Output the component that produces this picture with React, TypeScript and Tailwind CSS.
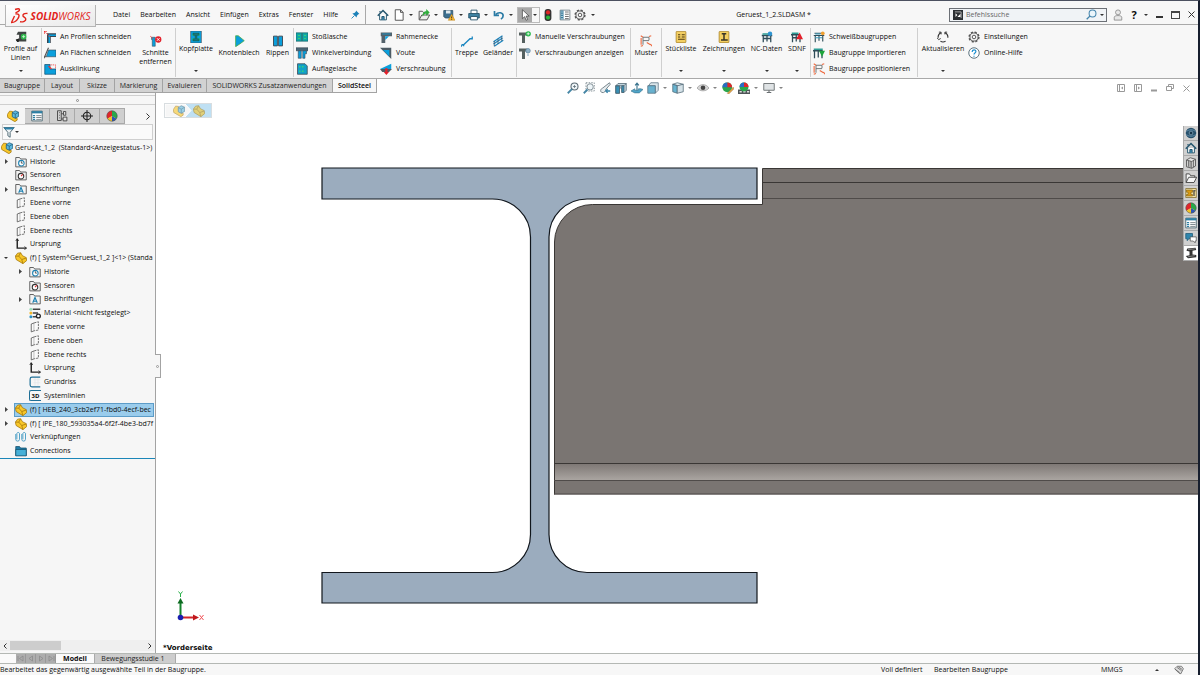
import React from "react";
import type { ReactNode } from "react";

const BLUE = "#0a9fdc";
const DARK = "#3b4650";

const shapes: Record<string, ReactNode> = {
  home: (
    <g stroke="#26566e" fill="none" strokeWidth="1.3">
      <path d="M3.500 8v6.500h9V8" fill="#fff" />
      <path d="M6.500 14.500V10h3v4.500" fill="#3c90b8" />
      <path d="M1 9L8 2l7 7" strokeWidth="2" />
      <path d="M4 4.500V2.500" strokeWidth="1.600" />
    </g>
  ),
  doc: <path d="M3 1h7l3.500 3.500V15H3zM10 1v3.500h3.500" fill="#fff" stroke="#555" strokeWidth="1.300" />,
  open: (
    <g strokeWidth="1.300">
      <path d="M1.500 14V3H6l1.500 2H12v3" fill="#f4f4f4" stroke="#555" />
      <path d="M1.500 14.500L5 8h10.500L12 14.500z" fill="#eee" stroke="#555" />
      <path d="M6 10c0-5 2-7 5-7V0l4.500 4.500L11 9V6C8.500 6 7.500 8 6 10z" fill="#2fae3c" />
    </g>
  ),
  save: (
    <g>
      <path d="M1 2h12v10H3L1 10z" fill="#3c6f8e" stroke="#2b4b60" />
      <path d="M4 2h6v4H4z" fill="#dfe9ee" />
      <path d="M11.500 7l4.500 8H7z" fill="#f7b52c" stroke="#b97a10" strokeWidth=".6" />
      <path d="M11.500 10v2.500M11.500 13.300v1" stroke="#222" strokeWidth="1.100" />
    </g>
  ),
  print: (
    <g stroke="#27556b" strokeWidth="1.200">
      <path d="M4 6V1.500h8V6" fill="#fff" />
      <path d="M1 6h14v6H1z" fill="#3f83a3" />
      <path d="M3.500 10h9v4.500h-9z" fill="#fff" />
    </g>
  ),
  undo: (
    <g fill="none" stroke="#2a7ba5" strokeWidth="2.200">
      <path d="M3.500 7.500C7 3.500 13.500 4.500 13.500 9c0 2-1 3.500-3 4.500" />
      <path d="M2 2.500v6h6" />
    </g>
  ),
  cursor: <path d="M4.500 1v12l3-2.800 2 4.800 2-1-2-4.600h4z" fill="#fff" stroke="#444" strokeWidth="1" />,
  traffic: (
    <g>
      <rect x="3.500" y="0" width="9" height="16" rx="4" fill="#333" />
      <circle cx="8" cy="4.500" r="2.800" fill="#e02626" />
      <circle cx="8" cy="11.400" r="2.800" fill="#29b53a" />
    </g>
  ),
  list: (
    <g>
      <path d="M1.500 1.500h13v13h-13z" fill="#fff" stroke="#5c6b73" />
      <path d="M2 2h4v12H2z" fill="#3a7f9f" />
      <path d="M3 4h2M3 7h2M3 10h2M3 13h2" stroke="#fff" />
      <path d="M8 4h5M8 7h5M8 10h5M8 12.800h5" stroke="#444" />
    </g>
  ),
  gear: (
    <g fill="none" stroke="#555">
      <circle cx="8" cy="8" r="6.500" strokeWidth="2" strokeDasharray="2.900 2.205" />
      <circle cx="8" cy="8" r="5.400" strokeWidth="1.200" />
      <circle cx="8" cy="8" r="2.400" strokeWidth="1.300" />
    </g>
  ),
  pin: (
    <g fill="#1c82b9">
      <path d="M9 1l6 6-2 .5-2.500 2.500-.5 3.500L2.500 6 6 5.500 8.500 3z" />
      <path d="M6 10l-5 5" stroke="#1c82b9" strokeWidth="1.600" />
    </g>
  ),
  person: (
    <g fill="#e8e8e8" stroke="#888" strokeWidth="1.100">
      <circle cx="8" cy="4.500" r="3.300" />
      <path d="M3 14.800V11c0-3 10-3 10 0v3.800z" />
    </g>
  ),
  lens: (
    <g fill="#eaf5fb" stroke="#4585ad" strokeWidth="1.500">
      <path d="M6 10L1 15" strokeWidth="2" />
      <circle cx="9.500" cy="6.500" r="5" />
    </g>
  ),
  prompt: (
    <g>
      <rect width="16" height="16" fill="#2a2f33" />
      <path d="M3 3h10v10" fill="none" stroke="#ccc" strokeWidth="1.200" />
      <path d="M4 5l3 3-3 3M12 6v5H7z" fill="#fff" />
    </g>
  ),
  profile: (
    <g>
      <path d="M4 1h11v4H9.500v5H15v4H3l-2-2.500L5.500 10V5H2z" fill="#3f4443" />
      <path d="M1 11.500l4-1.500v4.500H3z" fill="#222" />
      <circle cx="11.500" cy="7.500" r="3.800" fill="#2fb54b" />
      <path d="M9.500 7.500h4M11.500 5.500v4" stroke="#d8ffe0" strokeWidth="1" />
    </g>
  ),
  cutProfile: (
    <g>
      <path d="M4 3h12v5H9v8H4z" fill={DARK} />
      <path d="M6 4.500h10v2.300H8V16H6z" fill={BLUE} />
      <path d="M0 0l8 8" stroke="#e33" strokeWidth="1.200" strokeDasharray="2 1" />
      <path d="M0 .5h4M.5 0v4" stroke="#e33" />
    </g>
  ),
  cutFace: (
    <g>
      <path d="M6 4h10v9H3z" fill={BLUE} stroke={DARK} strokeWidth=".8" />
      <path d="M0 15L6 1M0 13h3" stroke="#555" strokeWidth="1.500" />
    </g>
  ),
  notch: (
    <g>
      <path d="M1 2h7v6h8v7H1z" fill={BLUE} stroke="#17557a" strokeWidth="1" />
      <path d="M8.500 2.500h7V8" fill="none" stroke="#e33" strokeWidth="1" strokeDasharray="2 1" />
      <path d="M6 4l4 4" stroke="#e33" strokeWidth="1.500" />
    </g>
  ),
  removeCut: (
    <g>
      <path d="M2 3h5v12H3V6H2z" fill={BLUE} stroke={DARK} strokeWidth=".7" />
      <path d="M0 1l4 4" stroke="#e33" />
      <circle cx="11" cy="6" r="4.200" fill="#e3202b" />
      <path d="M9.200 4.200l3.600 3.600M12.800 4.200L9.200 7.800" stroke="#fff" strokeWidth="1.200" />
    </g>
  ),
  headPlate: (
    <g>
      <rect x="1" y="0" width="14" height="16" fill={BLUE} stroke={DARK} strokeWidth=".8" />
      <path d="M4 3h8v2.500H9v5h3V13H4v-2.500h3v-5H4z" fill="#16788a" stroke="#1b5b2d" strokeWidth=".8" />
      <path d="M3 5.500h1.500M11.500 5.500H13M3 10.500h1.500M11.500 10.500H13" stroke="#24d05a" strokeWidth="1.200" />
    </g>
  ),
  gusset: <path d="M3.500 1H7l8 6.500L9 12l-5.500 3.500z" fill={BLUE} stroke="#47aa3c" strokeWidth="1" />,
  ribs: (
    <g fill={BLUE} stroke={DARK} strokeWidth="1.200">
      <path d="M2 1.500h5.200v13H2zM8.800 1.500H14v13H8.800z" />
    </g>
  ),
  splice: (
    <g>
      <rect x="0" y="2.500" width="16" height="11" fill="#10a8a8" stroke="#17636a" />
      <path d="M8 3v10" stroke={DARK} />
      <path d="M3 6h2M3 10h2M11 6h2M11 10h2" stroke="#45e067" strokeWidth="1.500" />
    </g>
  ),
  angle: (
    <g stroke={DARK} strokeWidth=".8">
      <path d="M0 1h16v4H0z" fill="#4a6675" />
      <path d="M3 5h4v10H3zM9 5h5v4h-2v6H9z" fill={BLUE} />
    </g>
  ),
  bearing: (
    <g>
      <path d="M2 1h10l3 3v11H2z" fill="#12a1c8" stroke={DARK} />
      <path d="M4 5h8M4 11h8" stroke="#35d37a" strokeDasharray="2 2" strokeWidth="2" />
    </g>
  ),
  corner: (
    <g>
      <path d="M1 2h15v5H7v9H2V7H1z" fill="#54626b" />
      <path d="M7 7h5l-5 5z" fill={BLUE} />
      <path d="M3 4h11" stroke={BLUE} strokeWidth="1" />
    </g>
  ),
  haunch: (
    <g>
      <path d="M0 1h15v15z" fill="#4d5b64" />
      <path d="M4 4h8.500v8.500z" fill={BLUE} />
    </g>
  ),
  bolting: (
    <g>
      <path d="M0 8L15 1v7z" fill={BLUE} />
      <path d="M0 8h16l-4 4H3z" fill="#4d5b64" />
      <path d="M7 7h3v5h2l-3.500 4L5 12h2z" fill="#e3202b" />
    </g>
  ),
  stair: <path d="M0 15.500L1.500 13h2l8.500-8h3V2M3.500 13v2" fill="none" stroke="#1b86c0" strokeWidth="1.700" />,
  rail: (
    <g stroke="#1b86c0" strokeWidth="1.700">
      <path d="M2 9L14 1M2 12L14 4M3 15L15 7" />
      <path d="M3 8v7M8 5v7M13 2v6" stroke="#35536a" strokeWidth="1" />
    </g>
  ),
  boltManual: (
    <g>
      <path d="M0 2h11v4H8v10H4V6H0z" fill="#55605f" />
      <circle cx="12.300" cy="3.700" r="3.500" fill="#27b94a" />
      <path d="M10.300 3.700h4M12.300 1.700v4" stroke="#fff" />
    </g>
  ),
  boltShow: (
    <g>
      <path d="M0 2h11v4H8v10H4V6H0z" fill="#55605f" />
      <circle cx="12" cy="5" r="3" fill="#8eb0c6" stroke="#5f87a1" />
      <path d="M12 9v3" stroke="#8eb0c6" strokeWidth="1.500" />
    </g>
  ),
  pattern: (
    <g fill="none">
      <path d="M4 13V3h8v4M4 7.500h8" stroke="#6d7376" strokeWidth="1.300" />
      <path d="M1 1l3 2M12 2l3-1M9 10l5 3M1 15l3-1M1.500 4v9M14 12l2 3" stroke="#ee6a40" strokeWidth="1.500" />
    </g>
  ),
  parts: (
    <g>
      <rect x="1.500" y="0.500" width="13" height="15" rx="1" fill="#f4cf62" stroke="#a67d22" />
      <path d="M4 5h3M9 5h4M4 8h3M9 8h4M4 11h9" stroke="#4d3a12" strokeWidth="1.400" />
    </g>
  ),
  drawing: (
    <g>
      <rect x="1.500" y="0.500" width="13" height="15" rx="1" fill="#f4cf62" stroke="#a67d22" />
      <path d="M5 3.500h6M8 3.500v8M4 12h9" stroke="#3a3426" strokeWidth="2" />
    </g>
  ),
  nc: (
    <g fill="none">
      <path d="M1 6h14M3 6v9M8 6v8M13 6v9M3 10h10" stroke="#2e4c58" strokeWidth="1.700" />
      <path d="M2 4h9" stroke="#2c9c95" strokeWidth="2" />
      <circle cx="12" cy="3.500" r="3" fill="#2e95d2" />
    </g>
  ),
  sdnf: (
    <g fill="none">
      <path d="M0 5h12M2 5v10M7 5v9M12 8v7M2 9h8" stroke="#2e4c58" strokeWidth="1.700" />
      <path d="M1 3h9" stroke="#2c9c95" strokeWidth="2" />
      <path d="M11.500 2l4.500 9H7z" fill="#e3202b" />
    </g>
  ),
  weld: (
    <g fill="none">
      <path d="M1 6h14M3 6v9M8 6v7M13 6v8M2 3h12" stroke="#2e4c58" strokeWidth="1.500" />
      <path d="M3 4h7M3 9h9" stroke="#3b9fc0" strokeWidth="1.600" />
      <circle cx="13" cy="3" r="2.500" fill="#f0a030" />
    </g>
  ),
  importAsm: (
    <g fill="none">
      <path d="M0 5h13M2 5v10M7 5v9M12 5v10" stroke="#2e4c58" strokeWidth="1.700" />
      <path d="M1 3h12" stroke="#2c9c95" strokeWidth="2" />
      <path d="M8 5h8l-4 8z" fill="#1ea43c" />
    </g>
  ),
  refresh: (
    <g fill="none" stroke="#333" strokeWidth="1.500">
      <path d="M5.300 2.200A6.500 6.500 0 0 0 2.200 11M10.700 2.200A6.500 6.500 0 0 1 13.800 11M4.500 13.500a6.500 6.500 0 0 0 7 0" strokeDasharray="8 2" />
      <path d="M2.500 1.500h3v3M0 9l2.200 2.500L5 10M13.500 1.500h-3v3" strokeWidth="1.200" />
    </g>
  ),
  help: (
    <g fill="none">
      <circle cx="8" cy="8" r="7" fill="#fff" stroke="#4d6674" strokeWidth="1.200" />
      <path d="M5.500 6.500c0-3.500 5-3.500 5-.5 0 2-2.500 2-2.500 4M8 11.500v1.500" stroke="#1d8fd0" strokeWidth="1.600" />
    </g>
  ),
  zoomFit: (
    <g fill="none" stroke="#5d6c75" strokeWidth="1.400">
      <circle cx="10" cy="6" r="4.700" fill="#eef5f8" />
      <path d="M6.500 9.500L1 15" stroke="#4586a5" strokeWidth="2.400" />
      <path d="M8 6h4M10 4v4" strokeWidth="1" />
    </g>
  ),
  zoomArea: (
    <g fill="none" stroke="#7b8990" strokeWidth="1.200">
      <path d="M4 1h11v11H4z" strokeDasharray="2 1.500" />
      <circle cx="9.500" cy="6.500" r="4.200" fill="#eef5f8" />
      <path d="M6 10l-5 5" stroke="#4586a5" strokeWidth="2.400" />
    </g>
  ),
  prevView: (
    <g fill="none" stroke="#76848b" strokeWidth="1.300">
      <path d="M14 1L5 8c-3 1-4 5-1 6s5-2 5-4l6-7z" fill="#e7edf0" />
      <path d="M15 12H9M11.500 9.500L9 12l2.500 2.500" stroke="#3a84a8" strokeWidth="1.800" />
    </g>
  ),
  section: (
    <g stroke="#4f6470" strokeWidth="1">
      <path d="M1 5l3-3h11v9l-3 3H9V8H6v7H1z" fill="#c3d6df" />
      <path d="M1 5h5v10H1zM9 5h3v9H9z" fill="#378fb5" />
      <path d="M1 5h11l3-3" fill="none" />
    </g>
  ),
  orient: (
    <g fill="none" stroke="#37718c" strokeWidth="1.500">
      <path d="M8 12V2M5.500 4.500L8 1.500l2.500 3" />
      <path d="M0 12l5-3v2h5V9h3l3 1-5 4.500H5z" fill="#4fa5c8" strokeWidth=".8" />
    </g>
  ),
  viewBox: (
    <g stroke="#577080" strokeWidth="1">
      <path d="M5 1h10v10l-4 4V5H2z" fill="#dbe6eb" />
      <path d="M1 5h10v10H1z" fill="#67b1cf" />
    </g>
  ),
  cube: (
    <g stroke="#4d6674" strokeWidth="1">
      <path d="M1 3l6-2 8 2-6 2z" fill="#e6f1f5" />
      <path d="M1 3l6 2v10l-6-2z" fill="#68b4d1" />
      <path d="M15 3L7 5v10l8-2z" fill="#d5e2e8" />
    </g>
  ),
  eye: (
    <g>
      <path d="M0 8c4-6 12-6 16 0-4 5-12 5-16 0z" fill="#d6d6d6" stroke="#999" />
      <circle cx="8" cy="7.700" r="3.100" fill="#444" />
    </g>
  ),
  ball: (
    <g>
      <path d="M8 8L1.940 11.500A7 7 0 0 1 8 1z" fill="#e0262b" />
      <path d="M8 8V1a7 7 0 0 1 6.060 10.500z" fill="#29a84a" />
      <path d="M8 8l6.060 3.500A7 7 0 0 1 1.940 11.500z" fill="#f1c224" />
      <path d="M8 8l6.060 3.500A7 7 0 0 1 8 15z" fill="#2a55b8" />
      <circle cx="8" cy="8" r="7" fill="none" stroke="#4d4d4d" strokeWidth=".7" />
    </g>
  ),
  appearance: (
    <g>
      <circle cx="7" cy="7" r="6.500" fill="#2ba64b" />
      <path d="M7 7V.5A6.500 6.500 0 0 1 13.500 7z" fill="#e0262b" />
      <path d="M7 7H.5A6.500 6.500 0 0 1 7 .5z" fill="#2a6bc4" />
      <path d="M7 15l8-8 1 2-7 7z" fill="#e8a83a" stroke="#865" strokeWidth=".6" />
    </g>
  ),
  scene: (
    <g>
      <path d="M0 10h16v6H0z" fill="#4f5557" />
      <path d="M2 13h3M7 13h3M12 13h3" stroke="#ddd" strokeWidth="2" />
      <circle cx="8" cy="6.500" r="6" fill="#2ba64b" />
      <path d="M8 6.500V.5a6 6 0 0 1 6 6z" fill="#e0262b" />
      <path d="M8 6.500H2a6 6 0 0 1 6-6z" fill="#2a6bc4" />
    </g>
  ),
  monitor: (
    <g>
      <path d="M1 2h14v9H1z" fill="#dfe3e5" stroke="#6a6f72" strokeWidth="1.200" />
      <path d="M8 11v3M5 14h6" stroke="#6a6f72" strokeWidth="1.500" />
    </g>
  ),
  part: (
    <g stroke="#a17408" strokeWidth="1" strokeLinejoin="round">
      <path d="M.5 5.500L3.500 1.500l4-.5 2.500 4 5 2.500.5 4-5 4L1.500 10z" fill="#f8c729" />
      <path d="M.5 5.500L5 5.500l4 4.500 6-2M9 10l1.500 5.500M5 5.500l2.500-4.500" fill="none" />
    </g>
  ),
  assembly: (
    <g strokeLinejoin="round">
      <path d="M.5 6l3-4.500 4 .5v6l4 3 2 0v2.500l-3 2L1 10z" fill="#f8c729" stroke="#a17408" />
      <path d="M7 3.500L11 1l4.500 2v5.500L11 11 7 9z" fill="#5cb9de" stroke="#205e7e" />
      <path d="M7 3.500l4 2 4.500-2.500M11 5.500V11" fill="none" stroke="#205e7e" />
    </g>
  ),
  props: (
    <g>
      <path d="M1 1.500h14v13H1z" fill="#fff" stroke="#33535f" />
      <path d="M1 1.500h14v3H1z" fill="#2e7fa3" />
      <path d="M2.500 7.500h3M2.500 10h3M2.500 12.500h3" stroke="#2e7fa3" strokeWidth="1.500" />
      <path d="M7 7.500h7M7 10h7M7 12.500h7" stroke="#56646b" />
    </g>
  ),
  config: (
    <g fill="none" stroke="#444" strokeWidth="1.200">
      <path d="M2 1h5v13H2zM4 3.500h1M4 7h1M4 10.500h1M7 5h3M7 12h3" />
      <path d="M10 2h3v5h-3zM9.500 9.500h5v5h-5z" fill="#ddd" />
    </g>
  ),
  target: (
    <g fill="none" stroke="#222" strokeWidth="1.400">
      <circle cx="8" cy="8" r="5" />
      <path d="M8 0v16M0 8h16" />
    </g>
  ),
  funnel: (
    <g>
      <path d="M1 2h14L9.500 8.500V15l-3-2V8.500z" fill="#eef3f5" stroke="#44606c" strokeWidth="1.200" />
      <path d="M1 2h14l-2 2.500H3z" fill="#2e83ab" />
    </g>
  ),
  history: (
    <g>
      <path d="M1 14.500V2h5l1.500 2H15v10.500z" fill="#f3f3f3" stroke="#555" strokeWidth="1.200" />
      <circle cx="8.500" cy="9.500" r="3.700" fill="#fff" stroke="#1b7fb0" strokeWidth="1.400" />
      <path d="M8.500 7v2.500h2" fill="none" stroke="#333" />
    </g>
  ),
  sensor: (
    <g>
      <path d="M1 14.500V2h5l1.500 2H15v10.500z" fill="#f3f3f3" stroke="#555" strokeWidth="1.200" />
      <circle cx="8" cy="9.500" r="3.700" fill="#fff" stroke="#333" strokeWidth="1.400" />
      <path d="M8 9.500L10.500 7" stroke="#d22" strokeWidth="1.400" />
    </g>
  ),
  notes: (
    <g>
      <path d="M1 14.500V2h5l1.500 2H15v10.500z" fill="#f3f3f3" stroke="#555" strokeWidth="1.200" />
      <path d="M5 13L8 6l3 7M6 11h4" fill="none" stroke="#1b7fb0" strokeWidth="1.500" />
    </g>
  ),
  plane: (
    <g fill="#fafafa" stroke="#555" strokeWidth="1.100">
      <path d="M3 4l4-1.500V13L3 14.500z" />
      <path d="M7 2.500L12.500 1v11L7 13" strokeDasharray="3 1.200" />
    </g>
  ),
  origin: (
    <g stroke="#222" strokeWidth="1.900" fill="none">
      <path d="M3 1v12.500h12" />
      <path d="M1 4l2-3 2 3M12.500 11.500l3 2-3 2" strokeWidth="1" />
    </g>
  ),
  material: (
    <g>
      <path d="M5 3h10M5 8h7M5 13h5" stroke="#444" strokeWidth="1.700" />
      <circle cx="2.500" cy="3" r="2" fill="#9db" />
      <circle cx="2.500" cy="8" r="2" fill="#f3b52a" />
      <circle cx="2.500" cy="13" r="2" fill="#2c8fc2" />
      <circle cx="12.500" cy="12" r="2.600" fill="#fff" stroke="#222" strokeWidth="1.700" />
    </g>
  ),
  sketch: (
    <g fill="none">
      <path d="M6 5h9M6 9h9M8 2v11M12 2v11" stroke="#dde4e8" strokeWidth=".8" />
      <path d="M15 1.500H4Q1.500 1.500 1.500 4v8Q1.500 14.500 4 14.500h11" stroke="#1f6f96" strokeWidth="1.600" />
    </g>
  ),
  mates: (
    <g fill="none" stroke="#4fa0c6" strokeWidth="1.300">
      <path d="M1 4v7a2.500 2.500 0 0 0 5 0V3a2 2 0 0 0-3.500 0v8M9 4v7a2.500 2.500 0 0 0 5 0V3a2 2 0 0 0-3.500 0v8" />
    </g>
  ),
  folder: (
    <g stroke="#17506c">
      <path d="M1 14V2h5l1.500 2H15v10z" fill="#1f7da8" />
      <path d="M1 14.500V6h14v8.500z" fill="#45b0d8" />
    </g>
  ),
  globe: (
    <g>
      <circle cx="8" cy="8" r="7" fill="#27506b" />
      <path d="M2 6c3-3 9-3 12 0M2 10c3 3 9 3 12 0" fill="none" stroke="#6f9db9" strokeWidth="1.100" />
      <circle cx="8" cy="8" r="2.500" fill="#16354b" stroke="#9cc0d3" strokeWidth=".8" />
    </g>
  ),
  library: (
    <g fill="#e6e6e6" stroke="#4d4d4d" strokeWidth="1.100">
      <path d="M2 4l5-3 7 2v9l-5 3-7-2z" />
      <path d="M2 4l7 2 5-3M9 6v9M4.500 5v8M6.800 5.500v8.500M11.500 4.500v9" fill="none" />
    </g>
  ),
  folderLine: <path d="M1.500 14V2.500H6L7.500 5H13v2M1.500 14L5 7h10.500L12 14z" fill="#f5f5f5" stroke="#444" strokeWidth="1.200" />,
  palette: (
    <g>
      <path d="M1 2h14v12H1z" fill="#f5e3a4" stroke="#7e6a2a" />
      <path d="M2 4h8v3H8v3h2v2H2v-2h2V7H2z" fill="#d99b15" stroke="#6b4d08" strokeWidth=".7" />
      <path d="M12 5v7M11 5h3" stroke="#333" strokeWidth="1.500" />
    </g>
  ),
  chat: (
    <g>
      <path d="M1 2h9v7H5l-2 2.500V9H1z" fill="#2f86ad" stroke="#1c5875" />
      <path d="M7 6.500h8V12h-1.500v2.500L11 12H7z" fill="#fff" stroke="#555" />
    </g>
  ),
  steel: (
    <g fill="#333">
      <path d="M3 2l11-1 1 3-5 1v5l5 .5v3L4 15l-3-3 5-1V6L2 5z" />
      <path d="M4 3.500l9-1M4 13l9-1.500" stroke="#999" />
    </g>
  ),
  tag: (
    <g fill="#ddd" stroke="#555" strokeWidth="1.100">
      <path d="M1 6l4-4h7l3 4-4 8-3-1z" />
      <path d="M2 7l7 5M5 4l7 5M7 3l6 4" fill="none" />
    </g>
  ),
};

function Icon({ name, className = "size-3" }: { name: string; className?: string }) {
  return (
    <svg viewBox="0 0 16 16" className={`shrink-0 ${className}`} aria-hidden="true">
      {shapes[name]}
    </svg>
  );
}

function Caret({ className = "" }: { className?: string }) {
  return (
    <svg viewBox="0 0 4 2" className={`h-[2px] w-[4px] shrink-0 ${className}`} aria-hidden="true">
      <path d="M0 0h4L2 2z" fill="#333" />
    </svg>
  );
}

function QuickItem({ name, label }: { name: string; label: string }) {
  return (
    <div className="flex items-center">
      <button aria-label={label} className="flex w-[14px] justify-center">
        <Icon name={name} />
      </button>
      <button aria-label={`${label} Optionen`} className="flex w-[11px] justify-center">
        <Caret />
      </button>
    </div>
  );
}

function TitleBar() {
  const menus = ["Datei", "Bearbeiten", "Ansicht", "Einfügen", "Extras", "Fenster", "Hilfe"];
  return (
    <header className="flex h-6 shrink-0 items-center border-b border-[#a9a9a9] bg-[#f7f7f7] pt-[4px]">
      <div className="relative z-10 ml-[5px] flex h-[22px] w-[91px] shrink-0 items-center justify-center gap-[3px] self-start border border-t-0 border-[#b5b5b5] bg-gradient-to-br from-white to-[#e9e9e9] text-[#e2231a]">
        <svg viewBox="0 0 17 16" className="h-4 w-[17px] shrink-0" fill="none" stroke="#e2231a" strokeWidth="1.400">
          <path d="M4 1.500c3-1 4.500-1 4.500.2C8.500 3 6.500 4 4.500 4.800" />
          <path d="M4.500 6C8 5.500 9 7.500 7 10.500c-1.500 2.500-4 4-6.500 4L3.500 8" />
          <path d="M16.500 5.500c-3-.5-5 .8-4.500 2.500.3 1 2.700 1.500 2.800 3 .2 2-2.800 3.300-5.800 2.800" />
        </svg>
        <span className="font-['Open_Sans',sans-serif] text-[10px] leading-none italic">
          <b>SOLID</b>WORKS
        </span>
      </div>
      <nav className="ml-[12px] flex w-[232px] shrink-0">
        {menus.map((m) => (
          <button key={m} className="px-[5px]">
            {m}
          </button>
        ))}
      </nav>
      <button aria-label="Menü anheften" className="ml-[10px] flex w-[11px] shrink-0 justify-center">
        <Icon name="pin" className="size-[9px]" />
      </button>
      <div className="ml-[4px] flex h-full w-[233px] shrink-0 items-center border-l border-[#a9a9a9] pl-[10px]">
        <button aria-label="Start" className="mr-[2px] flex w-[14px] justify-center">
          <Icon name="home" />
        </button>
        <QuickItem name="doc" label="Neu" />
        <QuickItem name="open" label="Öffnen" />
        <QuickItem name="save" label="Speichern" />
        <QuickItem name="print" label="Drucken" />
        <QuickItem name="undo" label="Rückgängig" />
        <div className="flex h-[16px] w-[24px] items-center border border-[#bbb]">
          <button aria-label="Auswählen" className="flex h-full flex-1 items-center justify-center bg-[#a8a8a8]">
            <Icon name="cursor" />
          </button>
          <button aria-label="Auswahl Optionen" className="flex w-[7px] justify-center">
            <Caret />
          </button>
        </div>
        <button aria-label="Modellneuaufbau" className="flex w-[17px] justify-center">
          <Icon name="traffic" />
        </button>
        <button aria-label="Dateieigenschaften" className="flex w-[17px] justify-center">
          <Icon name="list" />
        </button>
        <QuickItem name="gear" label="Optionen" />
      </div>
      <h1 className="flex-1 text-center">Geruest_1_2.SLDASM *</h1>
      <div className="flex h-[14px] w-[158px] shrink-0 items-center border border-[#6c7076] bg-[#f0f3f6] pl-[3px]">
        <Icon name="prompt" className="size-[10px]" />
        <input
          aria-label="Befehlssuche"
          placeholder="Befehlssuche"
          className="ml-[3px] min-w-0 flex-1 bg-transparent outline-none placeholder:text-[#666]"
        />
        <button aria-label="Suchen">
          <Icon name="lens" className="size-[11px]" />
        </button>
        <button aria-label="Suchoptionen" className="flex w-[9px] justify-center">
          <Caret />
        </button>
      </div>
      <div className="flex w-[91px] shrink-0 items-center pl-[5px]">
        <button aria-label="Anmelden" className="w-[12px]">
          <Icon name="person" className="size-3" />
        </button>
        <button aria-label="Hilfe" className="w-[20px] text-center text-[11px] leading-none font-bold">
          ?
        </button>
        <Caret />
        <button aria-label="Minimieren" className="ml-[8px] mt-[5px] h-[2px] w-[7px] bg-[#333]" />
        <button aria-label="Maximieren" className="ml-[8px] h-[8px] w-[9px] border border-t-2 border-[#444]" />
        <button aria-label="Schließen" className="ml-[8px]">
          <svg viewBox="0 0 7 7" className="size-[7px]" stroke="#333">
            <path d="M0.500 0.500l6 6M6.500 0.500l-6 6" />
          </svg>
        </button>
      </div>
    </header>
  );
}

function Group({ className, children }: { className: string; children: ReactNode }) {
  return <div className={`flex shrink-0 border-r border-[#cfcfcf] ${className}`}>{children}</div>;
}

function Big({ name, lines, width, menu = false }: { name: string; lines: string[]; width: string; menu?: boolean }) {
  return (
    <button className={`flex shrink-0 flex-col items-center gap-px ${menu ? "pt-[3px]" : "pt-[7px]"} ${width}`}>
      <Icon name={name} />
      <span className="flex flex-col items-center leading-[9px] whitespace-nowrap">
        {lines.map((l) => (
          <span key={l}>{l}</span>
        ))}
      </span>
      {menu && <Caret className="mt-auto mb-[5px]" />}
    </button>
  );
}

function Column({ items, className }: { items: [string, string][]; className: string }) {
  return (
    <div className={`flex shrink-0 flex-col pt-px ${className}`}>
      {items.map(([icon, label]) => (
        <button key={label} className="flex h-4 items-center gap-[4px] whitespace-nowrap">
          <Icon name={icon} />
          {label}
        </button>
      ))}
    </div>
  );
}

function Ribbon() {
  return (
    <div className="flex h-[54px] shrink-0 overflow-hidden border-b border-[#a9a9a9] bg-[#f7f7f7] pt-[3px] pb-px">
      <Group className="w-[42px]">
        <Big name="profile" lines={["Profile auf", "Linien"]} width="w-[41px]" menu />
      </Group>
      <Group className="w-[134px] pl-[2px]">
        <Column
          className="w-[93px]"
          items={[
            ["cutProfile", "An Profilen schneiden"],
            ["cutFace", "An Flächen schneiden"],
            ["notch", "Ausklinkung"],
          ]}
        />
        <Big name="removeCut" lines={["Schnitte", "entfernen"]} width="w-[37px]" />
      </Group>
      <Group className="w-[118px] pl-[1px]">
        <Big name="headPlate" lines={["Kopfplatte"]} width="w-[38px]" menu />
        <Big name="gusset" lines={["Knotenblech"]} width="w-[48px]" />
        <Big name="ribs" lines={["Rippen"]} width="w-[29px]" />
      </Group>
      <Group className="w-[158px] pl-[2px]">
        <Column
          className="w-[84px]"
          items={[
            ["splice", "Stoßlasche"],
            ["angle", "Winkelverbindung"],
            ["bearing", "Auflagelasche"],
          ]}
        />
        <Column
          className="w-[70px]"
          items={[
            ["corner", "Rahmenecke"],
            ["haunch", "Voute"],
            ["bolting", "Verschraubung"],
          ]}
        />
      </Group>
      <Group className="w-[65px]">
        <Big name="stair" lines={["Treppe"]} width="w-[29px]" />
        <Big name="rail" lines={["Geländer"]} width="w-[34px]" />
      </Group>
      <Group className="w-[114px] pl-[2px]">
        <Column
          className="w-[110px]"
          items={[
            ["boltManual", "Manuelle Verschraubungen"],
            ["boltShow", "Verschraubungen anzeigen"],
          ]}
        />
      </Group>
      <Group className="w-[31px]">
        <Big name="pattern" lines={["Muster"]} width="w-[30px]" />
      </Group>
      <Group className="w-[149px]">
        <Big name="parts" lines={["Stückliste"]} width="w-[38px]" menu />
        <Big name="drawing" lines={["Zeichnungen"]} width="w-[48px]" menu />
        <Big name="nc" lines={["NC-Daten"]} width="w-[37px]" menu />
        <Big name="sdnf" lines={["SDNF"]} width="w-[24px]" menu />
      </Group>
      <Group className="w-[107px] pl-[2px]">
        <Column
          className="w-[100px]"
          items={[
            ["weld", "Schweißbaugruppen"],
            ["importAsm", "Baugruppe importieren"],
            ["pattern", "Baugruppe positionieren"],
          ]}
        />
      </Group>
      <Big name="refresh" lines={["Aktualisieren"]} width="w-[50px]" menu />
      <Column
        className="w-[70px]"
        items={[
          ["gear", "Einstellungen"],
          ["help", "Online-Hilfe"],
        ]}
      />
    </div>
  );
}

function CommandTabs() {
  const tabs: [string, string][] = [
    ["Baugruppe", "w-[45px]"],
    ["Layout", "w-[35px]"],
    ["Skizze", "w-[35px]"],
    ["Markierung", "w-[48px]"],
    ["Evaluieren", "w-[44px]"],
    ["SOLIDWORKS Zusatzanwendungen", "w-[126px]"],
  ];
  return (
    <div className="flex h-[14px] shrink-0 bg-white" role="tablist">
      {tabs.map(([t, w]) => (
        <button
          key={t}
          role="tab"
          className={`shrink-0 border-r border-b border-[#a3a3a3] bg-[#d2d2d2] text-center whitespace-nowrap text-[#222] ${w}`}
        >
          {t}
        </button>
      ))}
      <button role="tab" aria-selected="true" className="w-[44px] shrink-0 border-r border-b border-[#a3a3a3] bg-[#f7f7f7] font-semibold">
        SolidSteel
      </button>
    </div>
  );
}

type Row = { depth: number; icon: string; label: string; open?: boolean; closed?: boolean; selected?: boolean };

const tree: Row[] = [
  { depth: 0, icon: "assembly", label: "Geruest_1_2  (Standard<Anzeigestatus-1>)" },
  { depth: 1, icon: "history", label: "Historie", closed: true },
  { depth: 1, icon: "sensor", label: "Sensoren" },
  { depth: 1, icon: "notes", label: "Beschriftungen", closed: true },
  { depth: 1, icon: "plane", label: "Ebene vorne" },
  { depth: 1, icon: "plane", label: "Ebene oben" },
  { depth: 1, icon: "plane", label: "Ebene rechts" },
  { depth: 1, icon: "origin", label: "Ursprung" },
  { depth: 1, icon: "part", label: "(f) [ System^Geruest_1_2 ]<1> (Standa", open: true },
  { depth: 2, icon: "history", label: "Historie", closed: true },
  { depth: 2, icon: "sensor", label: "Sensoren" },
  { depth: 2, icon: "notes", label: "Beschriftungen", closed: true },
  { depth: 2, icon: "material", label: "Material <nicht festgelegt>" },
  { depth: 2, icon: "plane", label: "Ebene vorne" },
  { depth: 2, icon: "plane", label: "Ebene oben" },
  { depth: 2, icon: "plane", label: "Ebene rechts" },
  { depth: 2, icon: "origin", label: "Ursprung" },
  { depth: 2, icon: "sketch", label: "Grundriss" },
  { depth: 2, icon: "sketch3d", label: "Systemlinien" },
  { depth: 1, icon: "part", label: "(f) [ HEB_240_3cb2ef71-fbd0-4ecf-bec", closed: true, selected: true },
  { depth: 1, icon: "part", label: "(f) [ IPE_180_593035a4-6f2f-4be3-bd7f", closed: true },
  { depth: 1, icon: "mates", label: "Verknüpfungen" },
  { depth: 1, icon: "folder", label: "Connections" },
];

const indent = ["pl-px", "pl-[3px]", "pl-[17px]"];

function TreeRow({ row }: { row: Row }) {
  return (
    <li className={`flex min-h-0 flex-1 items-center ${indent[row.depth]}`}>
      {row.depth > 0 && (
        <span className="flex w-[11px] shrink-0">
          {row.closed && (
            <svg viewBox="0 0 3 5" className="ml-[2px] h-[5px] w-[3px]">
              <path d="M0 0l3 2.500L0 5z" fill="#444" />
            </svg>
          )}
          {row.open && <Caret className="ml-[1px]" />}
        </span>
      )}
      <span
        className={`flex h-full min-w-0 flex-1 items-center overflow-hidden whitespace-pre ${
          row.depth > 0 ? "gap-[3px] pl-px" : "gap-[2px]"
        } ${row.selected ? "bg-[#9accec] ring-1 ring-[#5c9cc8] ring-inset" : ""}`}
      >
        {row.icon === "sketch3d" ? (
          <span className="flex h-[11px] w-3 shrink-0 items-center justify-center rounded-l-[2px] border border-r-0 border-[#1f6f96] text-[6px] leading-none font-bold">
            3D
          </span>
        ) : (
          <Icon name={row.icon} />
        )}
        {row.label}
      </span>
    </li>
  );
}

function FeaturePanel() {
  const views = ["props", "config", "target", "ball"];
  return (
    <aside className="relative flex w-[156px] shrink-0 flex-col border-r border-[#a3a3a3] bg-[#f6f6f6]">
      <div className="mt-[2px] flex h-[10px] shrink-0 items-center justify-center border-y border-[#cfcfcf]">
        <span className="size-[3px] rounded-full border border-[#888]" />
      </div>
      <div className="mt-[3px] flex h-[16px] shrink-0 pr-[5px]">
        <button aria-label="FeatureManager" className="flex w-[25px] items-center justify-center">
          <Icon name="assembly" />
        </button>
        {views.map((v) => (
          <button key={v} aria-label={v} className="flex w-[25px] items-center justify-center border border-l-0 border-[#a9a9a9] bg-[#cfcfcf]">
            <Icon name={v} />
          </button>
        ))}
        <button aria-label="Weitere Registerkarten" className="ml-auto flex items-center">
          <svg viewBox="0 0 4 7" className="h-[7px] w-[4px]" fill="none" stroke="#333">
            <path d="M.5.500l3 3-3 3" />
          </svg>
        </button>
      </div>
      <div className="mx-[2px] flex h-[16px] shrink-0 items-center border border-[#cfcfcf] bg-[#fafafa]">
        <Icon name="funnel" />
        <Caret />
        <input aria-label="Baum filtern" className="min-w-0 flex-1 bg-transparent outline-none" />
      </div>
      <ul className="mt-px mr-px flex h-[317px] shrink-0 flex-col">
        {tree.map((row, i) => (
          <TreeRow key={i} row={row} />
        ))}
      </ul>
      <div className="h-px shrink-0 bg-[#1b86b8]" />
      <div className="mt-auto flex h-[11px] shrink-0 items-center bg-[#efefef] px-[3px]">
        <svg viewBox="0 0 4 6" className="h-[6px] w-[4px]" fill="none" stroke="#333">
          <path d="M3.500.5L1 3l2.500 2.500" />
        </svg>
        <span className="ml-[3px] h-[9px] w-[51px] bg-[#cdcdcd]" />
        <svg viewBox="0 0 4 6" className="ml-auto h-[6px] w-[4px]" fill="none" stroke="#333">
          <path d="M.5.500L3 3 .5 5.500" />
        </svg>
      </div>
      <div className="h-[2px] shrink-0" />
      <button
        aria-label="Bereich ausblenden"
        className="absolute top-[261px] -right-[6px] z-10 flex h-[24px] w-[6px] items-center justify-center border border-l-0 border-[#a3a3a3] bg-[#f6f6f6]"
      >
        <span className="size-[3px] rounded-full border border-[#999]" />
      </button>
    </aside>
  );
}

function Model() {
  return (
    <svg viewBox="156 93 1042 560" preserveAspectRatio="xMinYMin slice" className="absolute inset-0 h-full w-full" role="img" aria-label="Trägeranschluss">
      <defs>
        <linearGradient id="fillet" x1="0" y1="0" x2="0" y2="1">
          <stop offset="0" stopColor="#7d7774" />
          <stop offset="1" stopColor="#aba6a2" />
        </linearGradient>
      </defs>
      <path d="M762.500 168.500H1300V494.500H554.500V242A38 38 0 0 1 592.500 204.500H762.500Z" fill="#7a7572" />
      <path d="M554.500 463.500H1300V480.500H554.500Z" fill="url(#fillet)" />
      <g fill="none" stroke="#3a3735" strokeWidth="1">
        <path d="M1300 168.500H762.500V204.500H592.500A38 38 0 0 0 554.500 242V494.500" />
        <path d="M763 182.500H1300M554 463.500H1300" />
        <path d="M763 198.500H1300M554 480.500H1300M554 494H1300" stroke="#4f4b49" />
      </g>
      <path
        d="M322 168H757V199H587A38 38 0 0 0 549 237V534.500A38 38 0 0 0 587 572.500H757V603H322V572.500H492.500A38 38 0 0 0 530.500 534.500V237A38 38 0 0 0 492.500 199H322Z"
        fill="#9bacbe"
        stroke="#11161c"
        strokeWidth="1.200"
      />
    </svg>
  );
}

function ViewToolbar() {
  const items: [string, boolean][] = [
    ["zoomFit", false],
    ["zoomArea", false],
    ["prevView", false],
    ["section", false],
    ["orient", false],
    ["viewBox", true],
    ["cube", true],
    ["eye", true],
    ["appearance", false],
    ["scene", true],
    ["monitor", true],
  ];
  return (
    <div className="absolute -top-[11px] left-[411px] flex h-3 items-center">
      {items.map(([name, menu]) => (
        <button key={name} aria-label={name} className={`flex items-center gap-[4px] ${menu ? "w-[25px]" : "w-[16px]"}`}>
          <Icon name={name} />
          {menu && <Caret className="opacity-60" />}
        </button>
      ))}
    </div>
  );
}

function TaskPane() {
  const items = ["globe", "home", "library", "folderLine", "palette", "ball", "props", "chat", "steel"];
  return (
    <div className="absolute top-[33px] right-0 flex w-[15px] flex-col bg-[#d0d0d0]">
      {items.map((n) => (
        <button
          key={n}
          aria-label={n}
          className="flex h-[15px] items-center justify-center border-b border-l border-[#aaa] last:bg-white"
        >
          <Icon name={n} />
        </button>
      ))}
    </div>
  );
}

function Viewport() {
  return (
    <main className="relative min-w-0 flex-1 bg-white">
      <Model />
      <ViewToolbar />
      <div className="absolute -top-[9px] right-[8px] flex items-center gap-[9px] text-[#999]">
        <svg viewBox="0 0 8 8" className="size-[8px]" fill="none" stroke="currentColor">
          <path d="M.5.500h7v7h-7zM2.500.5v7" />
          <path d="M6 2.500v3L4 4z" fill="currentColor" stroke="none" />
        </svg>
        <svg viewBox="0 0 8 8" className="size-[8px]" fill="none" stroke="currentColor">
          <path d="M.5.500h7v7h-7zM2.500.5v7" />
          <path d="M4 2.500v3L6 4z" fill="currentColor" stroke="none" />
        </svg>
        <svg viewBox="0 0 6 8" className="h-[8px] w-[6px]">
          <path d="M0 5.500h6v2H0z" fill="currentColor" />
        </svg>
        <svg viewBox="0 0 8 8" className="size-[8px]" fill="none" stroke="currentColor">
          <path d="M2.500 2.500v-2h5v4h-2M.5 2.500h5v4h-5z" />
        </svg>
        <svg viewBox="0 0 7 7" className="size-[7px]" stroke="currentColor">
          <path d="M.5.500l6 6M6.500.5l-6 6" />
        </svg>
      </div>
      <div className="absolute top-[10px] left-[8px] flex h-[15px] w-[48px] items-center border border-[#d8dde0] bg-[#bfe0f3]">
        <svg viewBox="0 0 27 13" className="h-[13px] w-[27px] shrink-0">
          <path d="M0 0h20l6 6.500L20 13H0z" fill="#f6f6f6" stroke="#fff" />
        </svg>
        <Icon name="assembly" className="absolute left-[8px] size-3 opacity-60" />
        <Icon name="part" className="absolute left-[28px] size-3 opacity-60" />
      </div>
      <TaskPane />
      <svg viewBox="0 0 30 32" className="absolute bottom-[30px] left-[19px] h-8 w-[30px]" aria-label="Koordinatensystem">
        <path d="M3.500 0.500l2 2.500 2-2.500M5.500 3v3" fill="none" stroke="#2ab04a" />
        <path d="M5.500 26V12" stroke="#14832c" strokeWidth="2" />
        <path d="M2.500 12.500l3-5.500 3 5.500z" fill="#0c6a20" />
        <path d="M6 26.500h13" stroke="#d3262b" strokeWidth="2" />
        <path d="M18 23.500l6 3-6 3z" fill="#c0181d" />
        <path d="M24.500 24l4 5M28.500 24l-4 5" stroke="#f05055" />
        <circle cx="5.500" cy="26.500" r="2.800" fill="#1a1fb0" />
      </svg>
      <span className="absolute bottom-0 left-[7px] font-['DejaVu_Sans',sans-serif] text-[7px] leading-[10px] font-bold">*Vorderseite</span>
    </main>
  );
}

function BottomTabs() {
  const nav = ["M7 2v5L3.500 4.500zM2 2v5", "M6.500 2v5L3 4.500z", "M3.500 2v5L7 4.500z", "M3 2v5l3.500-2.500zM8 2v5"];
  return (
    <div className="flex h-[11px] shrink-0 border-y border-[#b4b8b4] bg-[#fafafa] pl-[16px]">
      {nav.map((d) => (
        <button key={d} aria-label="Registerkarte blättern" className="w-[10px] border-r border-[#999] bg-[#adadad]">
          <svg viewBox="0 0 10 9" className="h-[9px] w-[10px]" fill="none" stroke="#8c8c8c" strokeWidth=".8">
            <path d={d} />
          </svg>
        </button>
      ))}
      <button className="w-[38px] text-center leading-[9px] font-bold">Modell</button>
      <button className="w-[82px] border-x border-[#aaa] bg-[#cdcdcd] pr-[4px] text-center leading-[9px] text-[#222]">Bewegungsstudie 1</button>
    </div>
  );
}

function StatusBar() {
  return (
    <footer className="flex h-[11px] shrink-0 items-center bg-[#f7f7f7]">
      <span className="flex-1">Bearbeitet das gegenwärtig ausgewählte Teil in der Baugruppe.</span>
      <span className="w-[53px]">Voll definiert</span>
      <span className="w-[167px]">Bearbeiten Baugruppe</span>
      <span className="w-[54px]">MMGS</span>
      <Caret className="rotate-180" />
      <span className="flex w-[39px] justify-center">
        <Icon name="tag" className="size-[10px]" />
      </span>
    </footer>
  );
}

export default function App() {
  return (
    <div className="flex h-screen w-full flex-col overflow-hidden border-t border-r-2 border-t-[#4c5160] border-r-[#161e2e] bg-[#f7f7f7] font-['Open_Sans','Noto_Sans',sans-serif] text-[7px] leading-[10px] text-[#0c0c0c]">
      <TitleBar />
      <Ribbon />
      <CommandTabs />
      <div className="flex min-h-0 flex-1">
        <FeaturePanel />
        <Viewport />
      </div>
      <BottomTabs />
      <StatusBar />
    </div>
  );
}
